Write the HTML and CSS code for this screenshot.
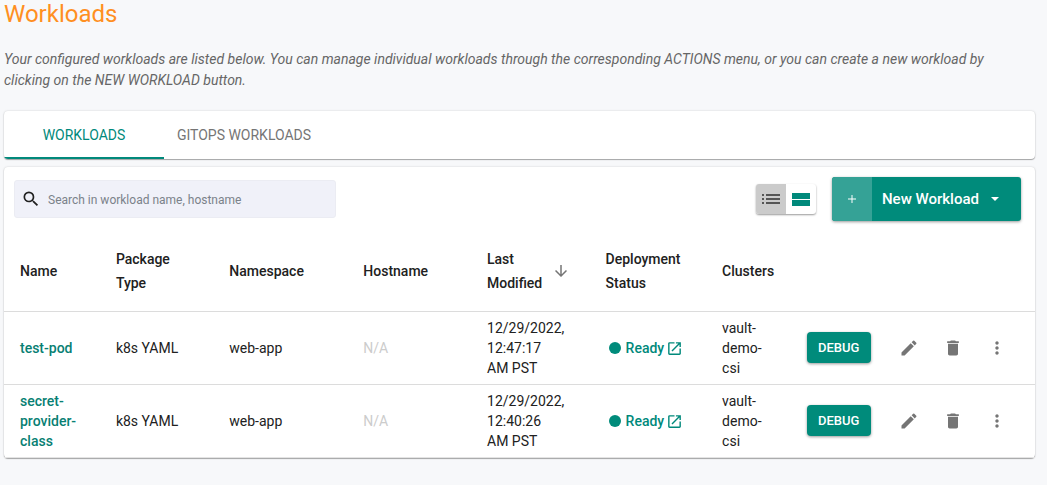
FILE: index.html
```html
<!DOCTYPE html>
<html lang="en">
<head>
<meta charset="utf-8">
<title>Workloads</title>
<link rel="stylesheet" href="styles.css">
</head>
<body>
<svg class="sprite" aria-hidden="true">
  <symbol id="edit" viewBox="0 0 24 24"><path d="M3 17.250V21h3.750L17.810 9.940l-3.750-3.750L3 17.250zM20.710 7.040a1 1 0 0 0 0-1.410l-2.340-2.340a1 1 0 0 0-1.410 0l-1.830 1.830 3.750 3.750 1.830-1.830z"/></symbol>
  <symbol id="trash" viewBox="0 0 24 24"><path d="M6 19c0 1.100.9 2 2 2h8c1.100 0 2-.9 2-2V7H6v12zM19 4h-3.500l-1-1h-5l-1 1H5v2h14V4z"/></symbol>
  <symbol id="more" viewBox="0 0 24 24"><path d="M12 8c1.100 0 2-.9 2-2s-.9-2-2-2-2 .9-2 2 .9 2 2 2zm0 2c-1.100 0-2 .9-2 2s.9 2 2 2 2-.9 2-2-.9-2-2-2zm0 6c-1.100 0-2 .9-2 2s.9 2 2 2 2-.9 2-2-.9-2-2-2z"/></symbol>
  <symbol id="open" viewBox="0 0 24 24"><path d="M19 19H5V5h7V3H5a2 2 0 0 0-2 2v14a2 2 0 0 0 2 2h14c1.100 0 2-.9 2-2v-7h-2v7zM14 3v2h3.590l-9.830 9.830 1.410 1.410L19 6.410V10h2V3h-7z"/></symbol>
</svg>
<main class="page">
  <h1 class="title">Workloads</h1>
  <p class="intro">Your configured workloads are listed below. You can manage individual workloads through the corresponding ACTIONS menu, or you can create a new workload by clicking on the NEW WORKLOAD button.</p>

  <div class="card tabs" role="tablist">
    <button class="tab tab-active" role="tab" aria-selected="true">WORKLOADS</button>
    <button class="tab" role="tab" aria-selected="false">GITOPS WORKLOADS</button>
  </div>

  <section class="card">
    <div class="toolbar">
      <label class="search">
        <svg class="search-icon" viewBox="0 0 24 24" aria-hidden="true"><path d="M15.500 14h-.79l-.28-.27A6.470 6.470 0 0 0 16 9.500 6.500 6.500 0 1 0 9.500 16c1.610 0 3.090-.59 4.230-1.570l.27.28v.79l5 4.990L20.490 19l-4.990-5zm-6 0C7.010 14 5 11.990 5 9.500S7.010 5 9.500 5 14 7.010 14 9.500 11.990 14 9.500 14z"/></svg>
        <input class="search-input" type="text" placeholder="Search in workload name, hostname" aria-label="Search workloads">
      </label>
      <div class="toggle">
        <button class="toggle-button toggle-selected" aria-label="List view"><svg class="toggle-icon" viewBox="0 0 18 12"><path d="M0 1h2v2H0zM4 1h14v2H4zM0 5h2v2H0zM4 5h14v2H4zM0 9h2v2H0zM4 9h14v2H4z"/></svg></button>
        <button class="toggle-button" aria-label="Card view"><svg class="toggle-icon stream" viewBox="0 0 18 14"><path d="M0 1h18v6H0zM0 8h18v6H0z"/></svg></button>
      </div>
      <button class="new-button">
        <span class="new-plus"><svg class="plus-icon" viewBox="0 0 10 10"><path d="M4.500 1h1v3.500H9v1H5.500V9h-1V5.500H1v-1h3.500z"/></svg></span>
        <span class="new-label">New Workload</span>
        <svg class="caret" viewBox="0 0 8 4"><path d="M0 0h8L4 4z"/></svg>
      </button>
    </div>

    <table class="table">
      <colgroup>
        <col class="col-name"><col class="col-type"><col class="col-namespace"><col class="col-host"><col class="col-modified"><col class="col-status"><col class="col-clusters"><col>
      </colgroup>
      <thead>
        <tr>
          <th>Name</th>
          <th>Package Type</th>
          <th>Namespace</th>
          <th>Hostname</th>
          <th aria-sort="descending"><button class="sort"><span>Last Modified</span><svg class="sort-icon" viewBox="0 0 24 24"><path d="M20 12l-1.410-1.410L13 16.170V4h-2v12.170l-5.580-5.590L4 12l8 8 8-8z"/></svg></button></th>
          <th>Deployment Status</th>
          <th>Clusters</th>
          <th></th>
        </tr>
      </thead>
      <tbody>
        <tr>
          <td><a class="name-link" href="#">test-pod</a></td>
          <td>k8s YAML</td>
          <td>web-app</td>
          <td class="muted">N/A</td>
          <td class="date">12/29/2022, 12:47:17 AM PST</td>
          <td><a class="status" href="#"><span class="dot"></span>Ready<svg class="open-icon"><use href="#open"/></svg></a></td>
          <td>vault-demo-csi</td>
          <td class="actions-cell"><div class="actions">
            <button class="debug">DEBUG</button>
            <button class="icon-button" aria-label="Edit"><svg class="icon"><use href="#edit"/></svg></button>
            <button class="icon-button" aria-label="Delete"><svg class="icon"><use href="#trash"/></svg></button>
            <button class="icon-button" aria-label="More actions"><svg class="icon"><use href="#more"/></svg></button>
          </div></td>
        </tr>
        <tr>
          <td><a class="name-link" href="#">secret-provider-class</a></td>
          <td>k8s YAML</td>
          <td>web-app</td>
          <td class="muted">N/A</td>
          <td class="date">12/29/2022, 12:40:26 AM PST</td>
          <td><a class="status" href="#"><span class="dot"></span>Ready<svg class="open-icon"><use href="#open"/></svg></a></td>
          <td>vault-demo-csi</td>
          <td class="actions-cell"><div class="actions">
            <button class="debug">DEBUG</button>
            <button class="icon-button" aria-label="Edit"><svg class="icon"><use href="#edit"/></svg></button>
            <button class="icon-button" aria-label="Delete"><svg class="icon"><use href="#trash"/></svg></button>
            <button class="icon-button" aria-label="More actions"><svg class="icon"><use href="#more"/></svg></button>
          </div></td>
        </tr>
      </tbody>
    </table>
  </section>
</main>
</body>
</html>
```
FILE: styles.css
```css
* { box-sizing: border-box; }

body {
  margin: 0;
  background: #f7f8fa;
  color: #212121;
  font: 14px/20px Roboto, "Liberation Sans", sans-serif;
}

button {
  margin: 0;
  padding: 0;
  border: 0;
  background: none;
  color: inherit;
  font: inherit;
  cursor: pointer;
}

a { color: #00897b; text-decoration: none; }
svg { fill: currentColor; flex: none; }
.sprite { display: none; }

.page { padding: 0 12px 24px 4px; }

.title {
  margin: 0 0 21px;
  color: #ff8f1f;
  font-size: 24px;
  font-weight: 400;
  line-height: 28px;
}

.intro {
  margin: 0 0 20px;
  padding-right: 16px;
  color: #666;
  font-style: italic;
  line-height: 21px;
}

.card {
  background: #fff;
  border-radius: 4px;
  box-shadow: 0 1px 1px rgba(0, 0, 0, 0.3), 0 0 2px rgba(0, 0, 0, 0.18);
}

.tabs { display: flex; margin-bottom: 8px; overflow: hidden; }

.tab {
  min-width: 160px;
  height: 48px;
  padding: 2px 12px 0;
  border-bottom: 2px solid transparent;
  color: #757575;
}

.tab-active { color: #00897b; border-bottom-color: #00897b; }

.toolbar {
  display: flex;
  align-items: center;
  gap: 16px;
  padding: 10px 14px 10px 10px;
}

.search {
  display: flex;
  align-items: center;
  gap: 7px;
  width: 322px;
  height: 38px;
  padding: 0 6px;
  margin-right: auto;
  background: #f0f1f9;
  border: 1px solid #ebecf3;
  border-radius: 3px;
}

.search-icon { width: 20px; height: 20px; }

.search-input {
  flex: 1;
  min-width: 0;
  padding: 2px 0 0;
  border: 0;
  outline: 0;
  background: transparent;
  color: #212121;
  font: inherit;
  font-size: 12px;
}

.search-input::placeholder { color: #7b828a; opacity: 1; }

.toggle {
  display: flex;
  border-radius: 3px;
  overflow: hidden;
  box-shadow: 0 1px 2px rgba(0, 0, 0, 0.4);
}

.toggle-button {
  display: grid;
  place-items: center;
  width: 30px;
  height: 30px;
  color: #00897b;
}

.toggle-selected { background: #cbcbcb; color: #555; }
.toggle-icon { width: 18px; height: 12px; }
.stream { height: 14px; }

.new-button {
  display: flex;
  align-items: center;
  height: 44px;
  padding-right: 22px;
  border-radius: 3px;
  overflow: hidden;
  background: #008b7b;
  color: #fff;
  font-size: 15px;
  font-weight: 500;
  box-shadow: 0 1px 3px rgba(0, 0, 0, 0.4);
}

.new-plus {
  display: grid;
  place-items: center;
  align-self: stretch;
  width: 40px;
  background: #35a296;
}

.plus-icon { width: 10px; height: 10px; }
.new-label { padding: 0 12px 0 10px; }
.caret { width: 8px; height: 4px; }

.table { width: 100%; table-layout: fixed; border-collapse: collapse; }
.col-name { width: 9.3%; }
.col-type { width: 11%; }
.col-namespace { width: 13%; }
.col-host { width: 12%; }
.col-modified { width: 11.5%; }
.col-status { width: 11.3%; }
.col-clusters { width: 8.2%; }

.table th,
.table td {
  padding: 6px 16px;
  border-bottom: 1px solid #dcdcdc;
  text-align: left;
  vertical-align: middle;
}

.table th {
  padding: 16px;
  font-weight: 500;
  line-height: 24px;
}

.table tr:last-child td { border-bottom-color: #e4e4e4; }
.table .date { padding-right: 24px; }
.table .muted { color: #ccc; }
.name-link { color: #087f73; font-weight: 500; }

.sort { display: flex; align-items: center; gap: 4px; width: 100%; padding-right: 4px; text-align: left; }
.sort span { flex: 1; }
.sort-icon { width: 18px; height: 18px; color: #757575; }

.status { display: flex; align-items: center; gap: 4px; padding-left: 3px; font-weight: 500; }
.dot { width: 12px; height: 12px; margin-right: 1px; border-radius: 50%; background: #008b7b; }
.open-icon { width: 17px; height: 17px; margin-left: -2px; }

.table .actions-cell { padding-right: 0; }
.actions { display: flex; align-items: center; }

.debug {
  width: 64px;
  height: 31px;
  margin-right: 16px;
  margin-bottom: 1px;
  border-radius: 4px;
  background: #008b7b;
  color: #fff;
  font-size: 13px;
  font-weight: 500;
  box-shadow: 0 1px 3px rgba(0, 0, 0, 0.4);
}

.icon-button { display: grid; place-items: center; width: 44px; height: 44px; color: #757575; }
.icon { width: 20px; height: 20px; }
```
